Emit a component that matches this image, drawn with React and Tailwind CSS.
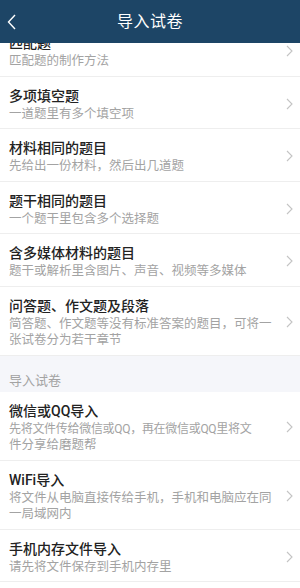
import React from 'react';

const font = { fontFamily: 'Roboto, "Noto Sans CJK SC", "Noto Sans", sans-serif' };

const topItems = [
  { title: '匹配题', desc: ['匹配题的制作方法'] },
  { title: '多项填空题', desc: ['一道题里有多个填空项'] },
  { title: '材料相同的题目', desc: ['先给出一份材料，然后出几道题'] },
  { title: '题干相同的题目', desc: ['一个题干里包含多个选择题'] },
  { title: '含多媒体材料的题目', desc: ['题干或解析里含图片、声音、视频等多媒体'] },
  { title: '问答题、作文题及段落', desc: ['简答题、作文题等没有标准答案的题目，可将一', '张试卷分为若干章节'] },
];

const importItems = [
  { title: '微信或QQ导入', desc: ['先将文件传给微信或QQ，再在微信或QQ里将文', '件分享给磨题帮'], tight: true },
  { title: 'WiFi导入', desc: ['将文件从电脑直接传给手机，手机和电脑应在同', '一局域网内'] },
  { title: '手机内存文件导入', desc: ['请先将文件保存到手机内存里'] },
];

const Chevron = () => (
  <svg width="7" height="12" viewBox="0 0 7 12" fill="none" className="shrink-0">
    <polyline points="1,1 6,6 1,11" stroke="#c4c4c4" strokeWidth="1.1" />
  </svg>
);

const Row = ({ item }) => (
  <div className="flex items-center bg-white border-b border-[#eeeeee] pl-[9px] pr-[7px] pt-[9px] pb-[6px]">
    <div className="flex-1 min-w-0">
      <div className="text-[14px] leading-[20px] font-medium text-[#222222]">{item.title}</div>
      {item.desc.map((line, i) => (
        <div
          key={line}
          className={
            item.tight && i === 0
              ? 'text-[12px] leading-[16.5px] text-[#a3a3a3] whitespace-nowrap tracking-[-0.3px]'
              : 'text-[12.5px] leading-[16.5px] text-[#a3a3a3] whitespace-nowrap'
          }
        >
          {line}
        </div>
      ))}
    </div>
    <Chevron />
  </div>
);

export default function App() {
  return (
    <div className="w-[300px] h-[588px] overflow-hidden bg-white flex flex-col" style={font}>
      {/* Header */}
      <div className="relative z-10 h-[43px] shrink-0 bg-[#1d4566] flex items-center justify-center">
        <svg width="10" height="16" viewBox="0 0 10 16" fill="none" className="absolute left-[7px] top-[14px]">
          <polyline points="8,1 1.5,8 8,15" stroke="#ffffff" strokeWidth="1.4" />
        </svg>
        <span className="text-white text-[16px] tracking-[0.5px]">导入试卷</span>
      </div>

      {/* List */}
      <div className="-mt-[19px]">
        {topItems.map((item) => (
          <Row key={item.title} item={item} />
        ))}
        <div className="bg-[#f5f6fa] h-[36px] pl-[9px] pt-[17px] text-[13px] leading-[16px] text-[#a3a3a3]">
          导入试卷
        </div>
        {importItems.map((item) => (
          <Row key={item.title} item={item} />
        ))}
      </div>
    </div>
  );
}
